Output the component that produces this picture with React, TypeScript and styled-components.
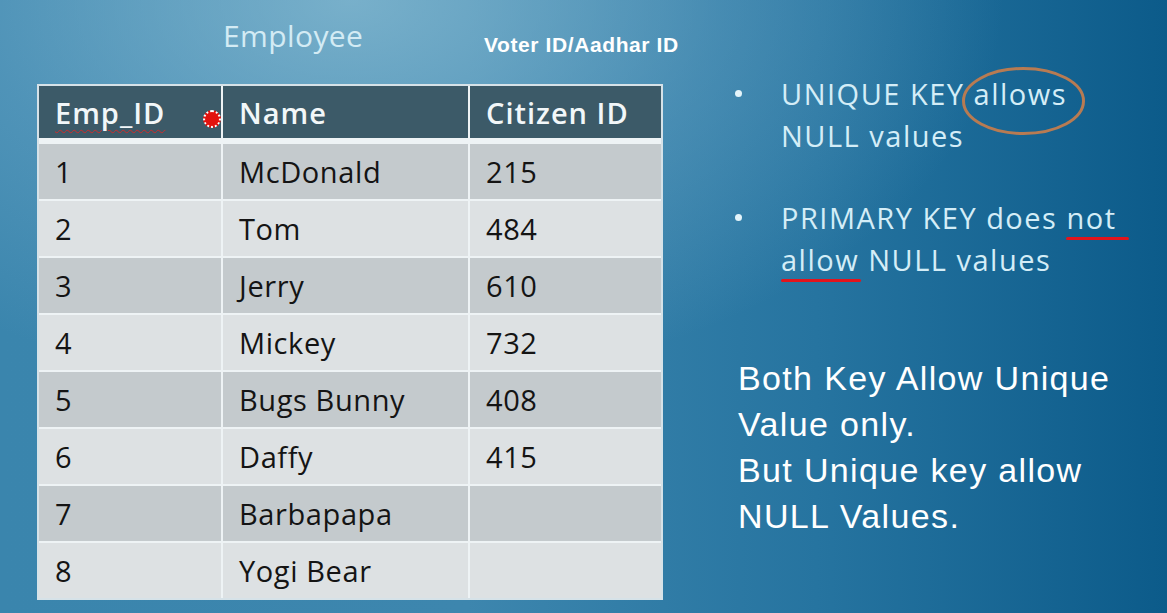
import React from "react";
import styled, { createGlobalStyle } from "styled-components";

const Global = createGlobalStyle`
  html, body { margin: 0; padding: 0; overflow: hidden; }
  body { font-family: "Open Sans", "Liberation Sans", sans-serif; }
`;

const Slide = styled.div`
  width: 1167px;
  height: 613px;
  display: flex;
  background:
    radial-gradient(ellipse 70% 80% at 30% 0%, rgba(140, 190, 212, 0.75) 0%, rgba(120, 175, 205, 0.35) 45%, rgba(60, 130, 170, 0) 80%),
    linear-gradient(90deg, #3a85ad 0%, #3d86ae 40%, #2674a0 70%, #0c5b8a 100%);
  overflow: hidden;
`;

const LeftCol = styled.div`
  box-sizing: border-box;
  width: 700px;
  padding-left: 37px;
  display: flex;
  flex-direction: column;
`;

const TitleRow = styled.div`
  height: 84px;
  display: flex;
  align-items: flex-start;
`;

const TableTitle = styled.div`
  width: 261px;
  margin-left: 186px;
  margin-top: 15px;
  font-family: "Open Sans", sans-serif;
  font-size: 30px;
  color: #d3ebf4;
  letter-spacing: 0.4px;
`;

const Note = styled.div`
  margin-top: 33px;
  font-family: "Liberation Sans", Arial, sans-serif;
  font-weight: 700;
  font-size: 21px;
  color: #ffffff;
  letter-spacing: 0.6px;
`;

const Table = styled.div`
  width: 622px;
  border: 2px solid #d6e2e8;
  background: #eef3f5;
  display: grid;
  grid-template-columns: 182px 245px 191px;
  column-gap: 2px;
  row-gap: 2px;
`;

const HeadCell = styled.div`
  position: relative;
  height: 52px;
  margin-bottom: 4px;
  background: #3c5a68;
  color: #f2f7f9;
  font-family: "Open Sans", sans-serif;
  font-weight: 600;
  font-size: 29px;
  display: flex;
  align-items: center;
  padding-left: 16px;
  letter-spacing: 1px;
`;

const Cell = styled.div<{ $odd: boolean }>`
  height: 55px;
  background: ${(p) => (p.$odd ? "#c4cacd" : "#dde1e3")};
  color: #141414;
  font-family: "Open Sans", sans-serif;
  font-size: 29px;
  display: flex;
  align-items: center;
  padding-left: 16px;
  letter-spacing: 0.6px;
`;

const Squiggle = styled.span`
  text-decoration: underline wavy #d02a2a;
  text-decoration-thickness: 1px;
  text-underline-offset: 5px;
`;

const Handle = styled.span`
  position: absolute;
  right: 0px;
  top: 24px;
  width: 14px;
  height: 14px;
  border-radius: 50%;
  background: #e2120e;
  border: 2px dotted #ffffff;
  z-index: 2;
`;

const RightCol = styled.div`
  flex: 1;
  padding-left: 38px;
  display: flex;
  flex-direction: column;
`;

const Bullets = styled.ul`
  list-style: none;
  margin: 0;
  padding: 0;
  margin-top: 73px;
  display: flex;
  flex-direction: column;
  gap: 40px;
`;

const Bullet = styled.li`
  position: relative;
  padding-left: 43px;
  font-family: "Open Sans", sans-serif;
  font-size: 29px;
  line-height: 42px;
  color: #d4edf7;
  letter-spacing: 1.5px;
  &::before {
    content: "";
    position: absolute;
    left: -3px;
    top: 17px;
    width: 7px;
    height: 7px;
    border-radius: 50%;
    background: #e4f4fa;
  }
`;

const Circled = styled.span`
  position: relative;
`;

const Oval = styled.svg`
  position: absolute;
  left: -12px;
  top: -7px;
  width: 123px;
  height: 68px;
  overflow: visible;
`;

const RedLine = styled.span<{ $left: number; $right: number }>`
  position: relative;
  &::after {
    content: "";
    position: absolute;
    left: ${(p) => p.$left}px;
    right: ${(p) => p.$right}px;
    bottom: -3px;
    height: 3px;
    border-radius: 2px;
    background: #e3141c;
  }
`;

const Summary = styled.div`
  margin-top: 74px;
  font-family: "Liberation Sans", Arial, sans-serif;
  font-size: 34px;
  line-height: 46px;
  color: #ffffff;
  letter-spacing: 1.35px;
`;

const rows: [string, string, string][] = [
  ["1", "McDonald", "215"],
  ["2", "Tom", "484"],
  ["3", "Jerry", "610"],
  ["4", "Mickey", "732"],
  ["5", "Bugs Bunny", "408"],
  ["6", "Daffy", "415"],
  ["7", "Barbapapa", ""],
  ["8", "Yogi Bear", ""],
];

export default function App() {
  return (
    <>
      <Global />
      <Slide>
        <LeftCol>
          <TitleRow>
            <TableTitle>Employee</TableTitle>
            <Note>Voter ID/Aadhar ID</Note>
          </TitleRow>
          <Table>
            <HeadCell>
              <Squiggle>Emp_ID</Squiggle>
              <Handle />
            </HeadCell>
            <HeadCell>Name</HeadCell>
            <HeadCell>Citizen ID</HeadCell>
            {rows.map((r, i) =>
              r.map((c, j) => (
                <Cell key={`${i}-${j}`} $odd={i % 2 === 0}>
                  {c}
                </Cell>
              ))
            )}
          </Table>
        </LeftCol>
        <RightCol>
          <Bullets>
            <Bullet>
              UNIQUE KEY{" "}
              <Circled>
                allows
                <Oval viewBox="0 0 123 68">
                  <ellipse cx="61.5" cy="34" rx="60" ry="32.5" fill="none" stroke="#b87b52" strokeWidth="3" />
                </Oval>
              </Circled>
              <br />
              NULL values
            </Bullet>
            <Bullet>
              PRIMARY KEY does <RedLine $left={0} $right={-12}>not</RedLine>
              <br />
              <RedLine $left={0} $right={-2}>allow</RedLine> NULL values
            </Bullet>
          </Bullets>
          <Summary>
            Both Key Allow Unique
            <br />
            Value only.
            <br />
            But Unique key allow
            <br />
            NULL Values.
          </Summary>
        </RightCol>
      </Slide>
    </>
  );
}
